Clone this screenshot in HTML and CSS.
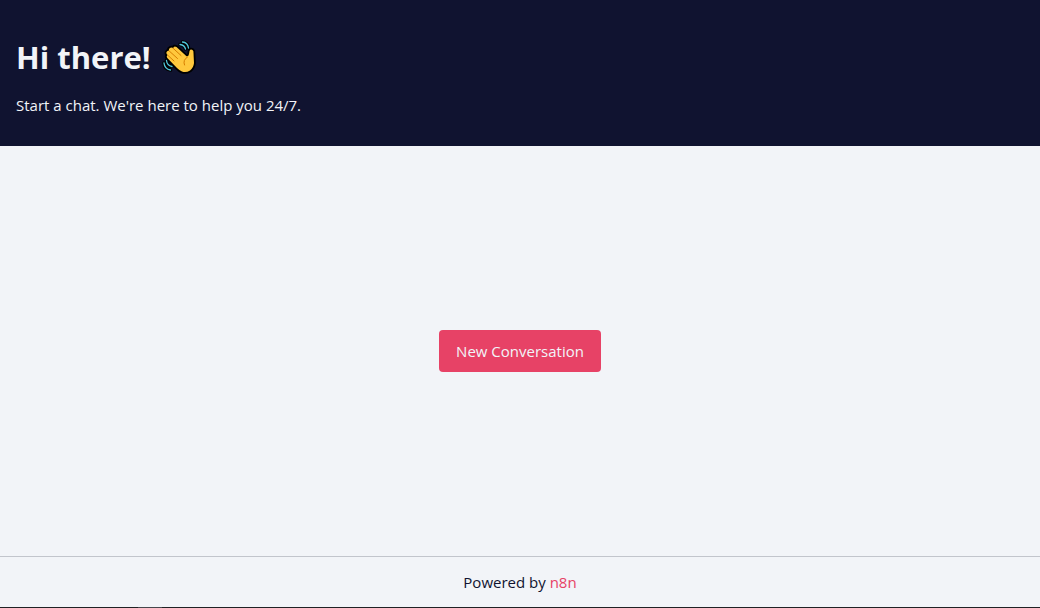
FILE: index.html
```html
<!DOCTYPE html>
<html lang="en">
<head>
<meta charset="utf-8">
<meta name="viewport" content="width=device-width, initial-scale=1">
<title>Chat</title>
<link rel="stylesheet" href="styles.css">
</head>
<body class="chat">
<header class="chat-header">
  <h1 class="chat-title"><span>Hi there!</span>
    <svg class="wave" viewBox="0 0 34 34" role="img" aria-label="Waving hand">
      <g fill="none" stroke="#000" stroke-width="3.600" stroke-linecap="round" stroke-linejoin="round">
        <path d="M18 4.500Q22.500 5 23.500 9M20.500 2Q25.800 2.500 26.500 8M4.500 20.500Q5 25.500 10 26.500M2 23Q2.500 29 8.500 30"/>
        <path fill="#000" d="M5.300 18Q4 16.500 5.500 15Q3.500 12.800 5 11.500Q5.500 10.500 7 10.800Q6.500 8.500 8 8Q9.500 7 11 8.200Q12 5.500 14.500 7L24.500 16.200Q26.500 17 27 14L27.500 11Q28.500 8.700 30.500 10Q31.800 11 31.500 13L32 23Q31.500 28 28 30.500Q24 33 20 31.500Q17.500 30.500 15 28Z"/>
      </g>
      <path fill="#ffc83d" d="M5.300 18Q4 16.500 5.500 15Q3.500 12.800 5 11.500Q5.500 10.500 7 10.800Q6.500 8.500 8 8Q9.500 7 11 8.200Q12 5.500 14.500 7L24.500 16.200Q26.500 17 27 14L27.500 11Q28.500 8.700 30.500 10Q31.800 11 31.500 13L32 23Q31.500 28 28 30.500Q24 33 20 31.500Q17.500 30.500 15 28Z"/>
      <g fill="none" stroke="#d67d00" stroke-width="1" stroke-linecap="round">
        <path d="M5.700 15.200L12 21M7 10.800L15.500 18.500M11 8.200L19 15.500M25.500 17Q20.500 20 22.500 25"/>
      </g>
      <g fill="none" stroke="#50c5dc" stroke-width="1.300" stroke-linecap="round">
        <path d="M18 4.500Q22.500 5 23.500 9M20.500 2Q25.800 2.500 26.500 8M4.500 20.500Q5 25.500 10 26.500M2 23Q2.500 29 8.500 30"/>
      </g>
    </svg>
  </h1>
  <p class="chat-subtitle">Start a chat. We're here to help you 24/7.</p>
</header>
<main class="chat-body">
  <button class="start-button" type="button">New Conversation</button>
</main>
<footer class="chat-footer">Powered by <a class="footer-link" href="#">n8n</a></footer>
<div class="bottom-edge"></div>
</body>
</html>
```
FILE: styles.css
```css
* {
  box-sizing: border-box;
}

.chat {
  display: flex;
  flex-direction: column;
  min-height: 100vh;
  margin: 0;
  background: #f2f4f8;
  color: #101330;
  font: 15px/24px "Segoe UI", "Open Sans", "Noto Sans", sans-serif;
}

.chat-header {
  display: flex;
  flex-direction: column;
  gap: 16px;
  padding: 37px 16px 29px;
  background: #101330;
  color: #f2f4f8;
}

.chat-title {
  display: flex;
  align-items: center;
  gap: 11px;
  margin: 0;
  font-size: 31px;
  line-height: 40px;
}

.wave {
  width: 34px;
  height: 34px;
  overflow: visible;
}

.chat-subtitle {
  margin: 0;
}

.chat-body {
  display: flex;
  flex: 1;
  align-items: center;
  justify-content: center;
}

.start-button {
  padding: 9px 17px;
  border: 0;
  border-radius: 4px;
  background: #e74266;
  color: #f2f4f8;
  font: inherit;
  cursor: pointer;
}

.chat-footer {
  padding: 13px 16px;
  border-top: 1px solid #c2c5cc;
  text-align: center;
}

.footer-link {
  color: #e74266;
  text-decoration: none;
}

.bottom-edge {
  height: 1px;
  background: linear-gradient(to right, #202124 138px, #46474c 138px 162px, #202124 162px);
}
```
